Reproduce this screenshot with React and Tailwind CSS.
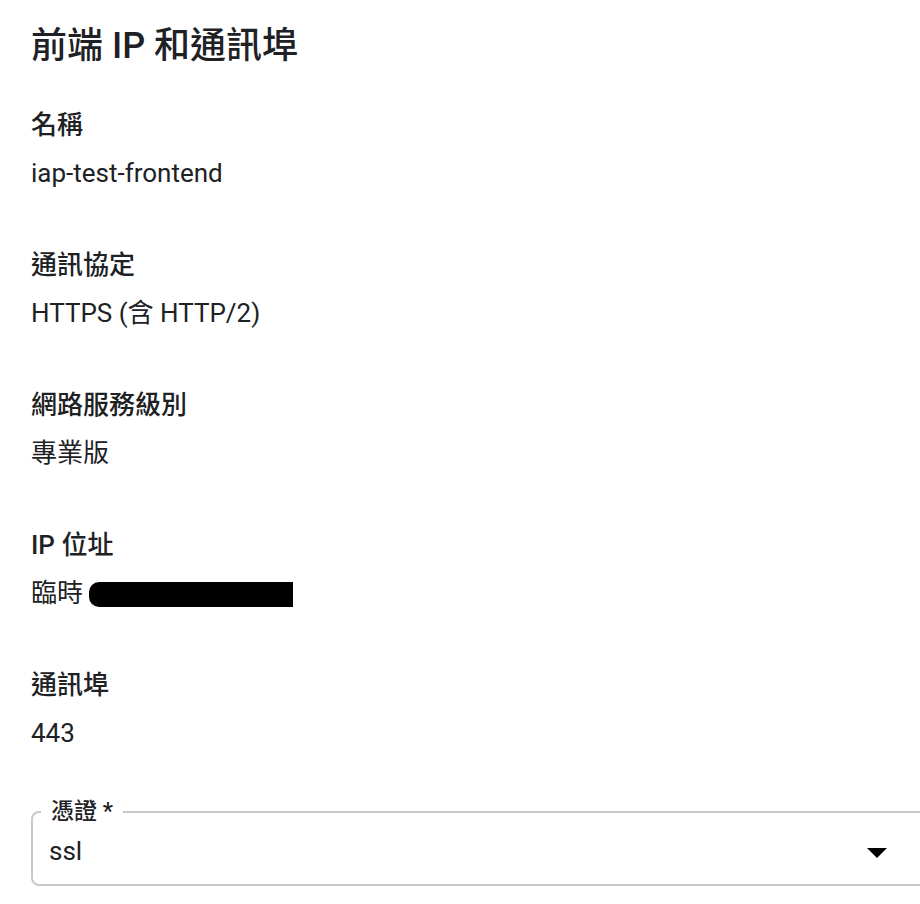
import React from 'react'

const FONT = "Roboto, 'Noto Sans CJK TC', sans-serif"

const FIELDS = [
  { label: '名稱', value: 'iap-test-frontend' },
  { label: '通訊協定', value: 'HTTPS (含 HTTP/2)' },
  { label: '網路服務級別', value: '專業版' },
  { label: 'IP 位址', value: null },
  { label: '通訊埠', value: '443' },
]

export default function App() {
  return (
    <div className="w-[920px] h-[904px] bg-white overflow-hidden text-[#202124]" style={{ fontFamily: FONT }}>
      <div className="pl-[31px] pt-[24px]">
        <h1 className="text-[36px] leading-[44px] font-medium">前端 IP 和通訊埠</h1>

        <div className="mt-[41px] flex flex-col gap-[60px]">
          {FIELDS.map(f => (
            <div key={f.label} className="flex flex-col gap-[16px]">
              <div className="text-[26px] leading-[32px] font-medium">{f.label}</div>
              <div className="text-[26px] leading-[32px]">
                {f.value ?? (
                  <span className="inline-flex items-center">
                    臨時 <span className="ml-[6px] inline-block w-[204px] h-[25px] mt-[2px] bg-black rounded-l-[10px]" />
                  </span>
                )}
              </div>
            </div>
          ))}
        </div>

        {/* Credential select, outlined with a notched label */}
        <fieldset className="mt-[51px] w-[930px] h-[86px] border-2 border-[#c8c8c8] rounded-[8px] pl-[8px]">
          <legend className="px-[10px] text-[23px] leading-[24px] font-medium">憑證 *</legend>
          <div className="flex items-center h-[46px] pl-[8px] pr-[72px] mt-[4px]">
            <span className="flex-1 text-[26px] leading-[32px]">ssl</span>
            <svg width="20" height="10" viewBox="0 0 20 10" className="mt-[4px]">
              <path d="M0 0 L20 0 L10 10 Z" fill="#000" />
            </svg>
          </div>
        </fieldset>
      </div>
    </div>
  )
}
